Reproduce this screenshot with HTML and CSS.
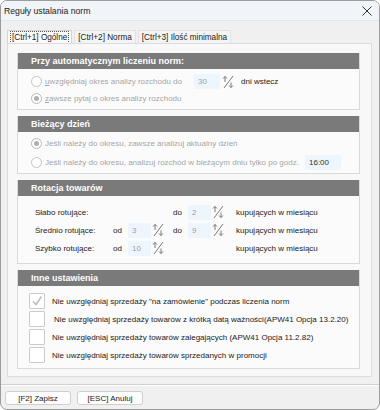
FILE: index.html
```html
<!DOCTYPE html>
<html lang="pl">
	<head>
		<meta charset="UTF-8" />
		<meta name="viewport" content="width=device-width, initial-scale=1.0" />
		<title>Reguły ustalania norm</title>
		<link rel="stylesheet" href="styles.css">
	</head>
	<body>
		<div class="window">
			<div class="titlebar">
				<span class="title">Reguły ustalania norm</span>
				<svg class="close" width="10" height="10" viewBox="0 0 10 10">
					<path d="M0.5 0.5 L9.5 9.5 M9.5 0.5 L0.5 9.5" stroke="#333" stroke-width="1" fill="none" />
				</svg>
			</div>
			<div class="client">
				<div class="tabs">
					<div class="tab active"><span class="focus">[Ctrl+1] Ogólne</span></div>
					<div class="tab">[Ctrl+2] Norma</div>
					<div class="tab">[Ctrl+3] Ilość minimalna</div>
				</div>
				<div class="page">
					<section class="group">
						<h2 class="group-head">Przy automatycznym liczeniu norm:</h2>
						<div class="group-body radios first">
							<div class="row">
								<span class="radio"></span>
								<span class="opt w149"><u>u</u>względniaj okres analizy rozchodu do</span>
								<span class="field w26">30</span>
								<svg class="spin" width="12" height="14" viewBox="0 0 12 14"><path d="M3 7V1.5M1 3.5L3 1.5L5 3.5M11 1L2 13M9 7.5V12.5M7 10.5L9 12.5L11 10.5" stroke="#777" stroke-width="1" fill="none" /></svg>
								<span class="note">dni wstecz</span>
							</div>
							<div class="row">
								<span class="radio checked"></span>
								<span class="opt"><u>z</u>awsze pytaj o okres analizy rozchodu</span>
							</div>
						</div>
					</section>

					<section class="group">
						<h2 class="group-head">Bieżący dzień</h2>
						<div class="group-body radios second">
							<div class="row">
								<span class="radio checked"></span>
								<span class="opt">Jeśli należy do okresu, zawsze analizuj aktualny dzień</span>
							</div>
							<div class="row tall">
								<span class="radio"></span>
								<span class="opt w260">Jeśli należy do okresu, analizuj rozchód w bieżącym dniu tylko po godz.</span>
								<span class="field w35 dark">16:00</span>
							</div>
						</div>
					</section>

					<section class="group">
						<h2 class="group-head">Rotacja towarów</h2>
						<div class="group-body rotation">
							<span class="lbl">Słabo rotujące:</span>
							<span></span><span></span><span></span>
							<span class="lbl">do</span>
							<span class="field">2</span>
							<svg class="spin" width="12" height="14" viewBox="0 0 12 14"><path d="M3 7V1.5M1 3.5L3 1.5L5 3.5M11 1L2 13M9 7.5V12.5M7 10.5L9 12.5L11 10.5" stroke="#777" stroke-width="1" fill="none" /></svg>
							<span class="lbl">kupujących w miesiącu</span>

							<span class="lbl">Średnio rotujące:</span>
							<span class="lbl">od</span>
							<span class="field">3</span>
							<svg class="spin" width="12" height="14" viewBox="0 0 12 14"><path d="M3 7V1.5M1 3.5L3 1.5L5 3.5M11 1L2 13M9 7.5V12.5M7 10.5L9 12.5L11 10.5" stroke="#777" stroke-width="1" fill="none" /></svg>
							<span class="lbl">do</span>
							<span class="field">9</span>
							<svg class="spin" width="12" height="14" viewBox="0 0 12 14"><path d="M3 7V1.5M1 3.5L3 1.5L5 3.5M11 1L2 13M9 7.5V12.5M7 10.5L9 12.5L11 10.5" stroke="#777" stroke-width="1" fill="none" /></svg>
							<span class="lbl">kupujących w miesiącu</span>

							<span class="lbl">Szybko rotujące:</span>
							<span class="lbl">od</span>
							<span class="field">10</span>
							<svg class="spin" width="12" height="14" viewBox="0 0 12 14"><path d="M3 7V1.5M1 3.5L3 1.5L5 3.5M11 1L2 13M9 7.5V12.5M7 10.5L9 12.5L11 10.5" stroke="#777" stroke-width="1" fill="none" /></svg>
							<span></span><span></span><span></span>
							<span class="lbl">kupujących w miesiącu</span>
						</div>
					</section>

					<section class="group">
						<h2 class="group-head">Inne ustawienia</h2>
						<div class="group-body checks">
							<div class="row">
								<span class="box">
									<svg width="14" height="14" viewBox="0 0 14 14"><path d="M3 7.5L6 10.5L11.5 2.5" stroke="#bdbdbd" stroke-width="1.6" fill="none" /></svg>
								</span>
								<span class="opt">Nie uwzględniaj sprzedaży "na zamówienie" podczas liczenia norm</span>
							</div>
							<div class="row">
								<span class="box"></span>
								<span class="opt shift">Nie uwzględniaj sprzedaży towarów z krótką datą ważności(APW41 Opcja 13.2.20)</span>
							</div>
							<div class="row">
								<span class="box"></span>
								<span class="opt">Nie uwzględniaj sprzedaży towarów zalegających (APW41 Opcja 11.2.82)</span>
							</div>
							<div class="row">
								<span class="box"></span>
								<span class="opt">Nie uwzględniaj sprzedaży towarów sprzedanych w promocji</span>
							</div>
						</div>
					</section>
				</div>
				<div class="footer">
					<button type="button">[F2] Zapisz</button>
					<button type="button">[ESC] Anuluj</button>
				</div>
			</div>
		</div>
	</body>
</html>
```

FILE: styles.css
```css
body {
	margin: 0;
	font: 8px "Liberation Sans", Arial, sans-serif;
	color: #1a1a1a;
	background: #fff;
}

.window {
	/* whole dialog, rounded like a Windows 11 frame */
	width: 380px;
	height: 410px;
	box-sizing: border-box;
	border: 1px solid #9c9c9c;
	border-radius: 7px;
	overflow: hidden;
	background: #f0f0f0;
	display: flex;
	flex-direction: column;
}

.titlebar {
	height: 19px;
	flex: none;
	display: flex;
	align-items: center;
	justify-content: space-between;
	padding: 0 7px 0 3px;
	background: #f1f4f9;
	border-bottom: 1px solid #e2e4e8;
}

.title {
	font-size: 8.7px;
	color: #1b1b1b;
}

.client {
	flex: 1;
	display: flex;
	flex-direction: column;
	padding: 9px 7px 0 6px;
}

/* tab strip */
.tabs {
	display: flex;
	height: 13px;
	gap: 2px;
}

.tab {
	display: flex;
	align-items: center;
	padding: 0 3px;
	font-size: 8.2px;
	background: #f4f4f4;
	border: 1px solid #e2e2e2;
	border-bottom: none;
}

.tab.active {
	padding: 0 3px;
	background: #fafafa;
	border-color: #d4d4d4;
}

.focus {
	outline: 1px dotted #555;
	padding: 0 1px;
	line-height: 11px;
}

.page {
	height: 334px;
	box-sizing: border-box;
	background: #f8f8f8;
	border: 1px solid #dcdcdc;
	padding: 9px 11px 0 9px;
	display: flex;
	flex-direction: column;
	gap: 6px;
}

/* group boxes with dark header */
.group {
	background: #fbfbfb;
	border: 1px solid #dadada;
	border-top: none;
}

.group-head {
	margin: 0;
	height: 16px;
	display: flex;
	align-items: center;
	padding-left: 13px;
	background: #7a7a7a;
	color: #fff;
	font-size: 9px;
	font-weight: bold;
}

.row {
	display: flex;
	align-items: center;
	height: 17px;
}

.radios {
	padding: 4px 0 2px 13px;
	color: #a6a6a6;
}

.radios.second {
	padding: 3px 0 1px 13px;
}

.radios .row.tall {
	height: 20px;
}

.radio {
	width: 9px;
	height: 9px;
	border: 1px solid #c4c4c4;
	border-radius: 50%;
	background: #fff;
	margin-right: 3px;
	flex: none;
	box-sizing: content-box;
	position: relative;
}

.radio.checked::after {
	content: "";
	position: absolute;
	left: 2px;
	top: 2px;
	width: 5px;
	height: 5px;
	border-radius: 50%;
	background: #b0b0b0;
}

.radio.checked {
	border: 1px solid #b8b8b8;
}

.opt u {
	text-decoration: underline;
}

.w149 {
	width: 149px;
}

.w260 {
	width: 260px;
}

.field {
	display: flex;
	align-items: center;
	height: 15px;
	box-sizing: border-box;
	padding-left: 4px;
	background: #edf6fd;
	color: #a0a0a0;
}

.field.w26 {
	width: 26px;
}

.field.w35 {
	width: 36px;
}

.field.dark {
	color: #333;
}

.spin {
	display: block;
	margin-left: 2px;
}

.note {
	margin-left: 7px;
	color: #1a1a1a;
}

/* rotation table */
.rotation {
	display: grid;
	grid-template-columns: 78px 15px 23px 22px 15px 23px 25px auto;
	grid-auto-rows: 18px;
	align-items: center;
	padding: 7px 0 6px 17px;
}

.rotation .spin {
	margin-left: 1px;
}

/* checkboxes */
.checks {
	padding: 6px 0 4px 11px;
}

.checks .row {
	height: 18px;
}

.box {
	width: 14px;
	height: 14px;
	border: 1px solid #cbcbcb;
	border-radius: 1px;
	background: #fff;
	margin-right: 7px;
	flex: none;
	display: flex;
	align-items: center;
	justify-content: center;
}

.shift {
	padding-left: 2px;
}

.footer {
	flex: 1;
	display: flex;
	align-items: flex-start;
	gap: 6px;
	margin: 7px -7px 0 -6px;
	padding: 6px 0 0 4px;
	border-top: 1px solid #d0d0d0;
	box-shadow: inset 0 1px 0 #fff;
}

button {
	font: 8px "Liberation Sans", Arial, sans-serif;
	color: #1a1a1a;
	width: 66px;
	height: 14px;
	padding: 0;
	background: #fdfdfd;
	border: 1px solid #cfcfcf;
	border-radius: 3px;
}
```
